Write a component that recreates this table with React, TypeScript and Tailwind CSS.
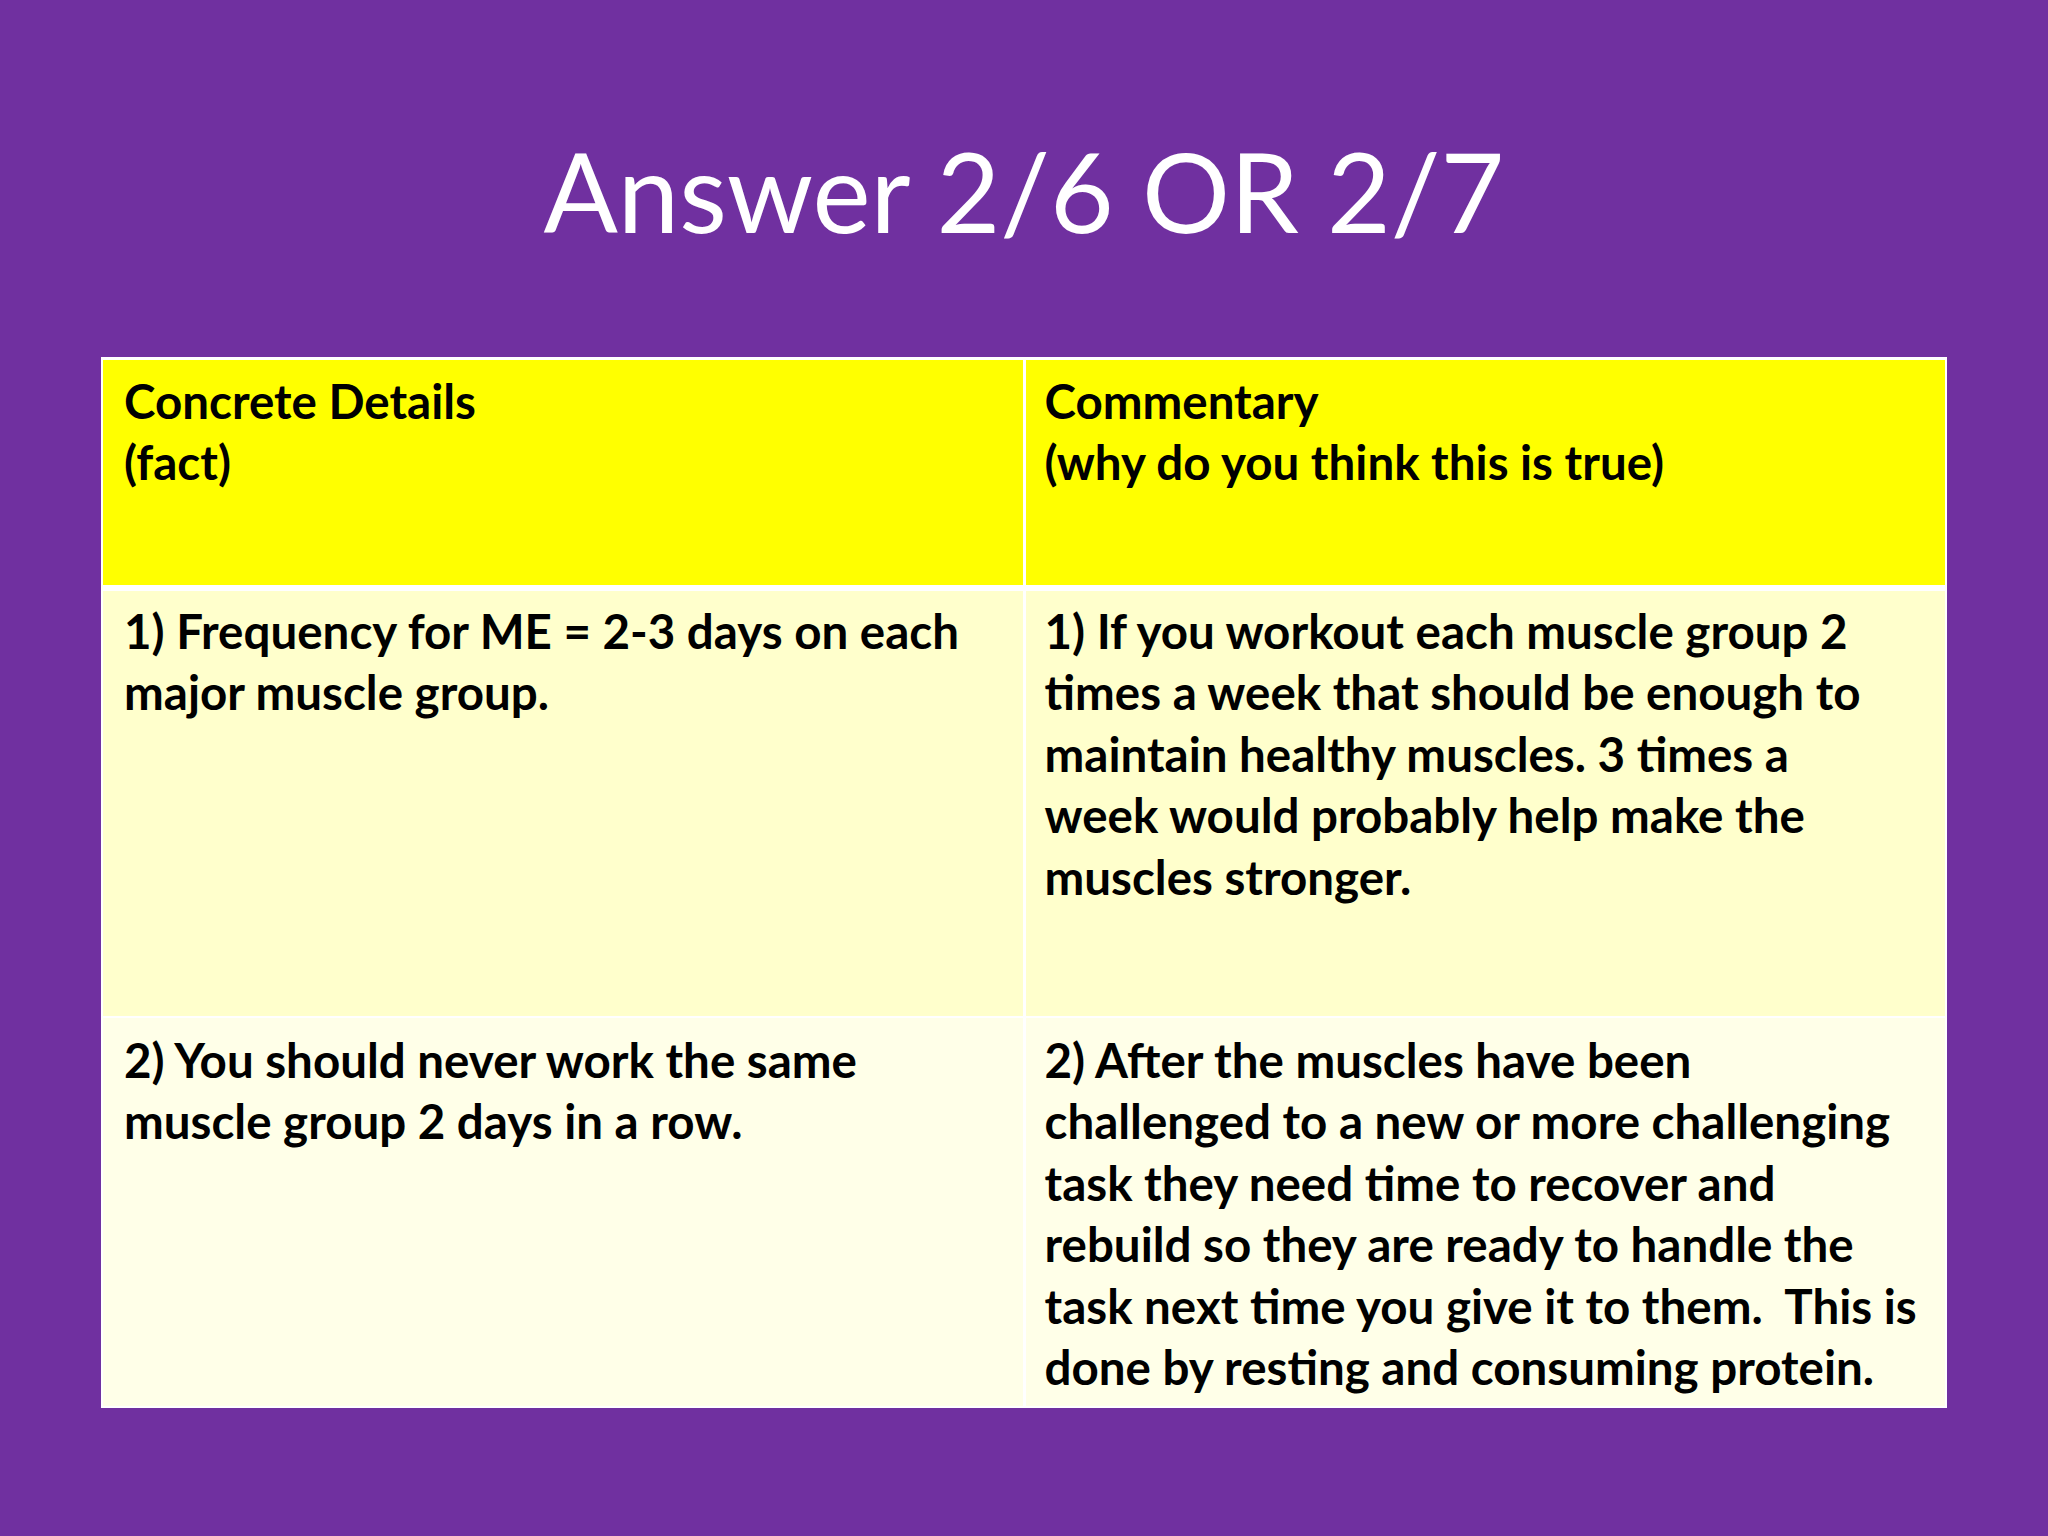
const HEADER = [
  ["Concrete Details", "(fact)"],
  ["Commentary", "(why do you think this is true)"],
];

const ROWS = [
  {
    bg: "bg-[#ffffcc]",
    h: "h-[425px]",
    left: ["1) Frequency for ME = 2-3 days on each", "major muscle group."],
    right: [
      "1) If you workout each muscle group 2",
      "times a week that should be enough to",
      "maintain healthy muscles. 3 times a",
      "week would probably help make the",
      "muscles stronger.",
    ],
  },
  {
    bg: "bg-[#ffffe8]",
    h: "h-[388px]",
    left: ["2) You should never work the same", "muscle group 2 days in a row."],
    right: [
      "2) After the muscles have been",
      "challenged to a new or more challenging",
      "task they need time to recover and",
      "rebuild so they are ready to handle the",
      "task next time you give it to them.  This is",
      "done by resting and consuming protein.",
    ],
  },
];

function Lines({ lines }: { lines: string[] }) {
  return (
    <>
      {lines.map((l) => (
        <div key={l} className="whitespace-pre">
          {l}
        </div>
      ))}
    </>
  );
}

export default function App() {
  return (
    <div className="min-h-screen bg-[#7030a0] font-['Lato',sans-serif] flex flex-col">
      {/* Title */}
      <h1 className="pt-[124px] text-center text-white text-[110px] leading-[132px] font-normal">
        Answer 2/6 OR 2/7
      </h1>

      {/* Table */}
      <div className="mt-[101px] ml-[101px] w-[1846px] h-[1051px] bg-white pt-[3px] px-[2px] pb-[2px] flex flex-col text-black font-bold text-[47.5px] leading-[61.4px]">
        <div className="grid grid-cols-2 gap-x-[3px] h-[225px]">
          <div className="bg-[#ffff00] pl-[21px] pt-[10px]">
            <Lines lines={HEADER[0]} />
          </div>
          <div className="bg-[#ffff00] pl-[19px] pt-[10px]">
            <Lines lines={HEADER[1]} />
          </div>
        </div>

        <div className={`mt-[6px] grid grid-cols-2 gap-x-[3px] ${ROWS[0].h}`}>
          <div className={`${ROWS[0].bg} pl-[21px] pt-[9px]`}>
            <Lines lines={ROWS[0].left} />
          </div>
          <div className={`${ROWS[0].bg} pl-[19px] pt-[9px]`}>
            <Lines lines={ROWS[0].right} />
          </div>
        </div>

        <div className="mt-[2px] grid grid-cols-2 gap-x-[3px] flex-1">
          <div className={`${ROWS[1].bg} pl-[21px] pt-[11px]`}>
            <Lines lines={ROWS[1].left} />
          </div>
          <div className={`${ROWS[1].bg} pl-[19px] pt-[11px]`}>
            <Lines lines={ROWS[1].right} />
          </div>
        </div>
      </div>
    </div>
  );
}
